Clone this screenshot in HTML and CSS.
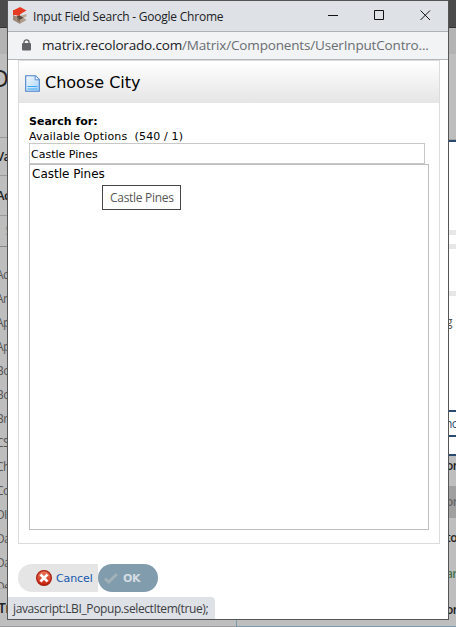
FILE: index.html
```html
<!DOCTYPE html>
<html lang="en">
<head>
<meta charset="utf-8">
<title>Input Field Search</title>
<link rel="stylesheet" href="styles.css">
</head>
<body>
<div class="backdrop">
  <div class="side left">
    <div class="bar"></div><div class="subbar"></div>
    <div class="crumb"><span>D</span></div>
    <div class="head h1"><span>Va</span></div>
    <div class="head h2"><span>Ac</span></div>
    <div class="search"><span>S</span></div>
    <ul class="names">
      <li>Ac</li><li>An</li><li>Ap</li><li>Ap</li><li>Bo</li><li>Bo</li><li>Br</li><li>CS</li><li>Ch</li><li>Co</li><li>DI</li><li>Da</li><li>Da</li><li>De</li>
    </ul>
    <div class="foot"><span>Tr</span></div>
  </div>
  <div class="side right">
    <div class="bar"></div><div class="subbar"></div>
    <div class="blank"></div>
    <div class="dialog">
      <i class="rule r1"></i><i class="rule r2"></i><i class="rule r3"></i>
      <div class="letter"><span>g</span></div>
      <div class="button"><span>no</span></div>
    </div>
    <div class="row first"><span>on</span></div>
    <div class="row picked"><span>on</span></div>
    <div class="row"><span>to</span></div>
    <div class="row green"><span>an</span></div>
    <div class="row"><span>on</span></div>
  </div>
</div>
<div class="edge"><i></i><b></b></div>

<main class="window">
  <header class="titlebar">
    <svg class="logo" width="14" height="17" viewBox="0 0 14 17">
      <path fill="#e63b22" d="M7 0l6.500 3.500L10 5.500 7 7.500 0 8V3.500z"/>
      <path fill="#e63b22" d="M0 3.500h7L7 9 4 8.500 0 7z"/>
      <path fill="#9c8878" d="M0 8l3.500 1.500v3.700L7 15v2l-7-4z"/>
      <path fill="#bba999" d="M7 9l6.500-2v2.500L10 11z"/>
      <path fill="#84705f" d="M3.500 9.300L7 11.200v4.300l-3.500-2.300z"/>
      <path fill="#5d4b40" d="M3.500 9.300L7 8.500l3.800 2.500L7 13z"/>
      <path fill="#b09c8b" d="M7 13l3.800-2 2.700 2L7 16.800z"/>
    </svg>
    <span class="caption">Input Field Search - Google Chrome</span>
    <svg class="controls" width="104" height="12" viewBox="0 0 104 12" fill="none" stroke="#111">
      <path d="M0 5.500h10M46.500 .5h9v9h-9zM92.500.5l9.500 9.500M102 .5l-9.500 9.500"/>
    </svg>
  </header>
  <div class="address">
    <svg width="9" height="12" viewBox="0 0 9 12"><path d="M2 5V3a2.500 2.200 0 0 1 5 0v2" fill="none" stroke="#5f6368" stroke-width="1.300"/><rect y="4" width="9" height="7.500" rx="1" fill="#5f6368"/></svg>
    <span class="url"><b>matrix.recolorado.com</b>/Matrix/Components/UserInputContro...</span>
  </div>
  <div class="content">
    <section class="panel">
      <h1>
        <svg width="15" height="17" viewBox="0 0 15 17">
          <defs><linearGradient id="sheet" x2="1" y2="1"><stop stop-color="#f5faff"/><stop offset="1" stop-color="#a9d2fb"/></linearGradient></defs>
          <path d="M.7.700h9.800l3.800 3.800v11.800H.7z" fill="url(#sheet)" stroke="#4a82cb" stroke-width="1.100"/>
          <path d="M10.200 1v3.800H14" fill="#fff" stroke="#5b91d5"/>
          <path d="M2.500 11.500h10M2.500 14h10" stroke="#3daaf0"/>
        </svg>
        <span>Choose City</span>
      </h1>
      <div class="form">
        <label for="q">Search for:</label>
        <p class="count">Available Options&nbsp; (540 / 1)</p>
        <input id="q" type="text" value="Castle Pines">
        <div class="options"><span>Castle Pines</span><div class="tooltip">Castle Pines</div></div>
      </div>
    </section>
    <div class="actions">
      <a class="cancel">
        <svg width="16" height="16" viewBox="0 0 16 16"><defs><linearGradient id="red" x2="0" y2="1"><stop stop-color="#ef7a5e"/><stop offset="1" stop-color="#c51f0c"/></linearGradient></defs><circle cx="8" cy="8" r="7.400" fill="url(#red)" stroke="#a92010" stroke-width="1.200"/><path d="M5.400 5.400l5.200 5.200M10.600 5.400l-5.200 5.200" stroke="#fff" stroke-width="2.700" stroke-linecap="square"/></svg>
        <span>Cancel</span>
      </a>
      <a class="ok">
        <svg width="14" height="12" viewBox="0 0 14 12"><path d="M1 6.500l3.800 3.500L13 2" fill="none" stroke="#a1b1b8" stroke-width="3"/></svg>
        <span>OK</span>
      </a>
    </div>
  </div>
  <div class="status"><span>javascript:LBI_Popup.selectItem(true);</span></div>
</main>
</body>
</html>
```

FILE: styles.css
```css
* { box-sizing: border-box; }
body { margin: 0; width: 456px; height: 627px; overflow: hidden; background: #bebebe; font-family: "Open Sans", sans-serif; }
span { white-space: nowrap; }
svg { flex: none; }
.backdrop { display: flex; justify-content: space-between; height: 620px; }
.side { width: 7px; height: 620px; overflow: hidden; font-size: 12px; color: #555; letter-spacing: -.6px; }
.side.right { width: 8px; padding-left: 1px; }
.bar { height: 28px; background: #4b4b4b; border-bottom: 1px solid #333; }
.subbar { height: 26px; background: #b3b3b3; }
.crumb { height: 84px; border-bottom: 1px solid #999; font-size: 23px; line-height: 48px; color: #222; }
.crumb span { margin-left: -8px; }
.head { font-weight: 600; font-size: 13px; color: #222; border-bottom: 1px solid #999; }
.head span { margin-left: -4px; }
.h1 { height: 38px; line-height: 37px; }
.h2 { height: 40px; line-height: 39px; }
.search { height: 31px; line-height: 30px; border-bottom: 1px solid #888; color: #999; padding-left: 5px; }
.names { list-style: none; margin: 0; padding: 16px 0 0; height: 342px; overflow: hidden; border-bottom: 1px solid #aaa; }
.names li { height: 24px; line-height: 24px; margin-left: -4px; white-space: nowrap; }
.foot { font-size: 14px; font-weight: 600; color: #222; line-height: 38px; }
.foot span { margin-left: -2px; }
.blank { height: 86px; border-bottom: 1px solid #a5a5a5; }
.dialog { height: 316px; border-top: 2px solid #294a70; border-bottom: 2px solid #294a70; background: #fff; }
.rule { display: block; height: 5px; background: #e7e7e7; }
.r1 { margin-top: 88px; }
.r2 { margin-top: 9px; }
.r3 { margin-top: 42px; }
.letter { margin-top: 18px; height: 20px; line-height: 16px; }
.letter span { margin-left: -3px; }
.button { margin-top: 76px; height: 27px; line-height: 24px; border-top: 2px solid #294a70; border-bottom: 2px solid #294a70; color: #294a70; }
.button span { margin-left: -4px; }
.row { height: 36px; line-height: 36px; font-weight: 600; color: #222; }
.row span { margin-left: -3px; }
.row.first { height: 30px; line-height: 19px; }
.row.picked { height: 32px; line-height: 31px; margin-bottom: 2px; background: #a0a0a0; color: #666; }
.row.green { color: #47744c; }
.edge { display: flex; height: 7px; background: #bebebe; }
.edge i { width: 236px; border-bottom: 1px solid #9b9ba0; }
.edge b { flex: 1; border-left: 1px solid #799bae; border-bottom: 1px solid #799bae; }

.window { position: absolute; left: 7px; top: 0; width: 442px; height: 620px; display: flex; flex-direction: column; background: #fff; border: 1px solid #555; }
.titlebar { height: 31px; flex: none; display: flex; align-items: center; padding: 0 16px 0 5px; background: #dee1e6; border-bottom: 1px solid #adb2b8; }
.logo { margin-top: -2px; }
.caption { margin-left: 6px; font-size: 12px; letter-spacing: -.22px; color: #202124; flex: 1; }
.address { height: 28px; flex: none; display: flex; align-items: center; padding-left: 14px; background: #f1f3f4; border-bottom: 1px solid #b4b7ba; }
.address svg { margin-top: -2px; }
.url { margin-left: 11px; margin-top: -1px; font-size: 13.5px; letter-spacing: -.17px; color: #6a6e73; }
.url b { font-weight: 400; color: #202124; }
.content { flex: 1; padding: 0 8px 0 10px; }
.panel { height: 484px; border: 1px solid #dcdcdc; font-family: "DejaVu Sans", sans-serif; }
h1 { margin: 0; height: 42px; display: flex; align-items: center; padding: 2px 0 0 6px; gap: 5px; background: linear-gradient(#fff, #e5e5e5); font-size: 16px; font-weight: 400; color: #000; }
h1 span { margin-top: -2px; }
.form { padding: 11px 10px 0; font-size: 11px; color: #000; }
label { display: block; font-weight: 700; height: 15px; line-height: 15px; }
.count { margin: 0; height: 14px; line-height: 16px; letter-spacing: .15px; }
input { display: block; width: 396px; height: 21px; padding: 1px 1px 0; border: 1px solid #c8c8c8; font: 11px "DejaVu Sans", sans-serif; color: #000; }
.options { position: relative; height: 366px; border: 1px solid #bebebe; padding-left: 2px; font-size: 12px; line-height: 18px; }
.tooltip { position: absolute; left: 72px; top: 20px; width: 79px; height: 25px; border: 1px solid #454545; background: #fff; color: #575757; padding-left: 7px; font: 12px/24px "Open Sans", sans-serif; letter-spacing: -.3px; white-space: nowrap; }
.actions { display: flex; margin-top: 20px; font-size: 11px; font-family: "DejaVu Sans", sans-serif; }
.actions a { height: 28px; display: flex; align-items: center; }
.cancel { width: 80px; padding-left: 18px; gap: 4px; border-radius: 14px 0 0 14px; background: #e5e5e5; color: #1459ad; }
.cancel span { letter-spacing: -.1px; }
.ok { width: 60px; padding-left: 6px; gap: 5px; border-radius: 14px; background: #819dad; color: #d3dce2; font-weight: 600; }
.ok span { letter-spacing: -.4px; }
.status { position: absolute; left: 0; bottom: 0; width: 207px; height: 22px; padding-left: 5px; border-radius: 0 4px 0 0; background: #dee1e6; color: #3c4043; font-size: 12px; letter-spacing: -.39px; line-height: 23px; }
```
